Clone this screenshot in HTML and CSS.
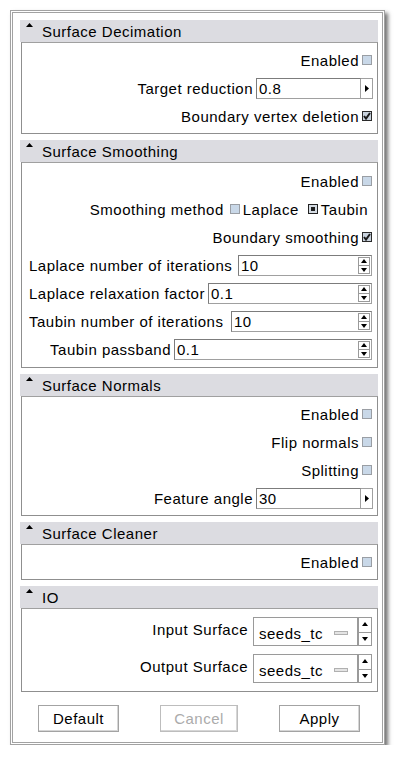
FILE: index.html
```html
<!DOCTYPE html>
<html lang="en">
    <head>
        <meta charset="UTF-8">
        <meta name="viewport" content="width=device-width, initial-scale=1.0">
        <title>Surface Filters</title>
        <link rel="stylesheet" href="styles.css">
    </head>
    <body>
        <div class="window">

            <section class="panel">
                <div class="panel-head"><svg class="caret" width="7" height="4" viewBox="0 0 7 4"><path d="M0 4h7L3.5 0z"/></svg>Surface Decimation</div>
                <div class="panel-body">
                    <div class="row"><span>Enabled</span><span class="check"></span></div>
                    <div class="row"><span>Target reduction</span>
                        <div class="entry"><span class="field">0.8</span><span class="arrow-btn"><svg width="4" height="7" viewBox="0 0 4 7"><path d="M0 0v7l4-3.5z"/></svg></span></div>
                    </div>
                    <div class="row"><span>Boundary vertex deletion</span><span class="check on"><svg width="10" height="10" viewBox="0 0 10 10"><path d="M2 5l2 2.5L8 2" fill="none" stroke="#1a1a1a" stroke-width="2"/></svg></span></div>
                </div>
            </section>

            <section class="panel">
                <div class="panel-head"><svg class="caret" width="7" height="4" viewBox="0 0 7 4"><path d="M0 4h7L3.5 0z"/></svg>Surface Smoothing</div>
                <div class="panel-body loose">
                    <div class="row"><span>Enabled</span><span class="check"></span></div>
                    <div class="row radios"><span class="lbl">Smoothing method</span>
                        <span class="check"></span><span class="opt">Laplace</span>
                        <span class="radio on"></span><span class="opt">Taubin</span>
                    </div>
                    <div class="row"><span>Boundary smoothing</span><span class="check on"><svg width="10" height="10" viewBox="0 0 10 10"><path d="M2 5l2 2.5L8 2" fill="none" stroke="#1a1a1a" stroke-width="2"/></svg></span></div>
                    <div class="row left"><span>Laplace number of iterations</span>
                        <div class="spin w134"><span class="field">10</span><span class="spin-btns"></span></div>
                    </div>
                    <div class="row left"><span>Laplace relaxation factor</span>
                        <div class="spin w164"><span class="field">0.1</span><span class="spin-btns"></span></div>
                    </div>
                    <div class="row left"><span>Taubin number of iterations</span>
                        <div class="spin w141"><span class="field">10</span><span class="spin-btns"></span></div>
                    </div>
                    <div class="row"><span>Taubin passband</span>
                        <div class="spin w198"><span class="field">0.1</span><span class="spin-btns"></span></div>
                    </div>
                </div>
            </section>

            <section class="panel">
                <div class="panel-head"><svg class="caret" width="7" height="4" viewBox="0 0 7 4"><path d="M0 4h7L3.5 0z"/></svg>Surface Normals</div>
                <div class="panel-body">
                    <div class="row"><span>Enabled</span><span class="check"></span></div>
                    <div class="row"><span>Flip normals</span><span class="check"></span></div>
                    <div class="row"><span>Splitting</span><span class="check"></span></div>
                    <div class="row"><span>Feature angle</span>
                        <div class="entry"><span class="field">30</span><span class="arrow-btn"><svg width="4" height="7" viewBox="0 0 4 7"><path d="M0 0v7l4-3.5z"/></svg></span></div>
                    </div>
                </div>
            </section>

            <section class="panel">
                <div class="panel-head"><svg class="caret" width="7" height="4" viewBox="0 0 7 4"><path d="M0 4h7L3.5 0z"/></svg>Surface Cleaner</div>
                <div class="panel-body">
                    <div class="row"><span>Enabled</span><span class="check"></span></div>
                </div>
            </section>

            <section class="panel">
                <div class="panel-head"><svg class="caret" width="7" height="4" viewBox="0 0 7 4"><path d="M0 4h7L3.5 0z"/></svg>IO</div>
                <div class="panel-body io">
                    <div class="row tall"><span class="top">Input Surface</span>
                        <div class="combo"><span class="combo-box">seeds_tc<i class="bar"></i></span><span class="combo-btns"></span></div>
                    </div>
                    <div class="row tall"><span class="top">Output Surface</span>
                        <div class="combo"><span class="combo-box">seeds_tc<i class="bar"></i></span><span class="combo-btns"></span></div>
                    </div>
                </div>
            </section>

            <div class="buttons">
                <button class="btn">Default</button>
                <button class="btn off">Cancel</button>
                <button class="btn">Apply</button>
            </div>
        </div>
    </body>
</html>
```

FILE: styles.css
```css
*{
    margin: 0;
    padding: 0;
    box-sizing: border-box;
}

body{
    background: #fff;
    font-family: "Liberation Sans", Arial, sans-serif;
    font-size: 15px;
    letter-spacing: 0.5px;
    color: #000;
}

.window{
    margin: 10px 0 0 10px;
    width: 375px;
    height: 735px;
    border: 3px double #a2a2a2;
    box-shadow: 3px 3px 4px rgba(0,0,0,0.55);
    padding: 7px 4px 0 7px;
    background: #fff;
}

.panel{
    margin-bottom: 6px;
}

.panel-head{
    display: flex;
    align-items: center;
    height: 22px;
    padding-left: 6px;
    background: #dcdce1;
}

.caret{
    align-self: flex-start;
    margin: 3px 9px 0 0;
    fill: #000;
}

.panel-body{
    margin-left: 1px;
    border: 1px solid #8f8f8f;
    border-top-color: #a0a0a0;
    padding: 3px 5px 3px 7px;
}
.panel-body.loose{padding-top: 4px; padding-bottom: 4px;}
.panel-body.io{padding-top: 4px; padding-bottom: 4px;}

.row{
    display: flex;
    justify-content: flex-end;
    align-items: center;
    height: 28px;
    gap: 3px;
    white-space: nowrap;
}
.row.left{justify-content: space-between;}
.row.tall{height: 37px; gap: 5px;}
.row .top{align-self: center; margin-top: -5px;}

.radios .lbl{margin-right: 3px;}
.radios .opt{margin-right: 6px;}
.radios .opt:last-child{margin-right: 4px;}

.check, .radio{
    display: inline-flex;
    flex: none;
    width: 10px;
    height: 10px;
    border: 1px solid #9a9ea4;
    background: #c9d8e8;
}
.check.on{
    border: none;
    background: #c9d3de;
    box-shadow: inset 0 0 0 1px #2a2a2a;
}
.radio.on{
    border: 1px solid #222;
    background: #d4dbe3;
    padding: 2px;
}
.radio.on::after{
    content: "";
    flex: 1;
    background: #1e1e1e;
}

.field{
    flex: 1;
    height: 21px;
    line-height: 19px;
    padding-left: 2px;
    border: 1px solid #a0a0a0;
    border-top-color: #7c7c7c;
    border-left-color: #7c7c7c;
    background: #fff;
}

.entry{
    display: flex;
    width: 117px;
    margin-right: -1px;
}
.arrow-btn{
    display: flex;
    align-items: center;
    justify-content: center;
    width: 12px;
    height: 21px;
    border: 1px solid #a0a0a0;
    border-left: none;
}

.spin{
    display: flex;
    position: relative;
}
.spin .field{padding-right: 16px;}
.spin-btns, .combo-btns{
    position: absolute;
    right: 2px;
    top: 2px;
    width: 12px;
    height: 17px;
    border: 1px solid #9a9a9a;
    background: #fff;
}
.spin-btns::before, .combo-btns::before{
    content: "";
    position: absolute;
    left: 2px;
    top: 1px;
    border: 3px solid transparent;
    border-bottom: 4px solid #000;
    border-top: none;
}
.spin-btns::after, .combo-btns::after{
    content: "";
    position: absolute;
    left: 2px;
    bottom: 1px;
    border: 3px solid transparent;
    border-top: 4px solid #000;
    border-bottom: none;
}
.spin-btns{
    background: linear-gradient(#fff 7px, #9a9a9a 7px, #9a9a9a 8px, #fff 8px);
}
.w134{width: 134px;}
.w141{width: 141px;}
.w164{width: 164px;}
.w198{width: 198px;}

.combo{
    display: flex;
    position: relative;
    width: 119px;
    height: 29px;
}
.combo-box{
    display: flex;
    align-items: center;
    width: 105px;
    height: 29px;
    padding: 3px 0 0 5px;
    border: 1px solid #9a9a9a;
}
.bar{
    width: 14px;
    height: 4px;
    margin-left: 11px;
    border: 1px solid #b0b0b0;
    background: #e4e4e4;
}
.combo-btns{
    right: 0;
    top: 0;
    width: 14px;
    height: 29px;
    background: linear-gradient(#fff 14px, #9a9a9a 14px, #9a9a9a 15px, #fff 15px);
}
.combo-btns::before{left: 3px; top: 4px;}
.combo-btns::after{left: 3px; bottom: 4px;}

.buttons{
    display: flex;
    justify-content: space-between;
    margin-top: 13px;
    padding: 0 18px;
}
.btn{
    width: 81px;
    height: 27px;
    border: 1px solid #a3a3a3;
    box-shadow: inset -1px -1px 0 #d6d6d6;
    background: #fff;
    font: inherit;
    letter-spacing: 0.5px;
    color: #000;
}
.btn.off{
    width: 78px;
    color: #ababab;
    border-color: #bdbdbd;
}
```
